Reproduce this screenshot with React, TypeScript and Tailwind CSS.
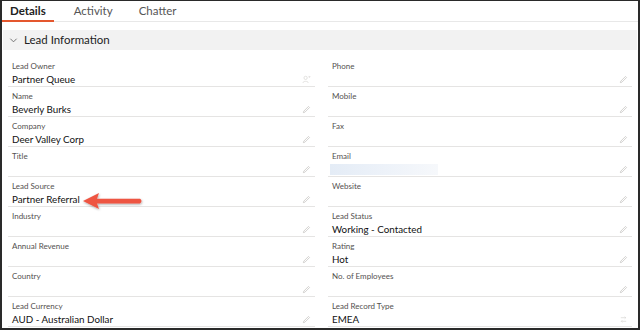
import React from 'react';

type Field = { label: string; value?: string; icon?: 'edit' | 'owner' | 'type'; blur?: boolean };

const LEFT: Field[] = [
  { label: 'Lead Owner', value: 'Partner Queue', icon: 'owner' },
  { label: 'Name', value: 'Beverly Burks' },
  { label: 'Company', value: 'Deer Valley Corp' },
  { label: 'Title' },
  { label: 'Lead Source', value: 'Partner Referral' },
  { label: 'Industry' },
  { label: 'Annual Revenue' },
  { label: 'Country' },
  { label: 'Lead Currency', value: 'AUD - Australian Dollar' },
];

const RIGHT: Field[] = [
  { label: 'Phone' },
  { label: 'Mobile' },
  { label: 'Fax' },
  { label: 'Email', blur: true },
  { label: 'Website' },
  { label: 'Lead Status', value: 'Working - Contacted' },
  { label: 'Rating', value: 'Hot' },
  { label: 'No. of Employees' },
  { label: 'Lead Record Type', value: 'EMEA', icon: 'type' },
];

const Pencil = () => (
  <svg width="9" height="9" viewBox="0 0 10 10" className="shrink-0">
    <path d="M1.5 8.5 L2 6.8 L7.2 1.6 L8.4 2.8 L3.2 8 Z" fill="none" stroke="#c9c7c5" strokeWidth="0.9" />
  </svg>
);

const OwnerIcon = () => (
  <svg width="9" height="9" viewBox="0 0 10 10" className="shrink-0">
    <circle cx="4" cy="3.2" r="1.8" fill="none" stroke="#d8d6d4" strokeWidth="0.8" />
    <path d="M1 8.8 C1.3 6.4 6.7 6.4 7 8.8" fill="none" stroke="#d8d6d4" strokeWidth="0.8" />
    <path d="M7 2 L9 2 M8 1 L9 2 L8 3" fill="none" stroke="#d8d6d4" strokeWidth="0.7" />
  </svg>
);

const TypeIcon = () => (
  <svg width="9" height="9" viewBox="0 0 10 10" className="shrink-0">
    <path d="M2 3 H7.5 M6.3 1.8 L7.5 3 L6.3 4.2 M8 7 H2.5 M3.7 5.8 L2.5 7 L3.7 8.2" fill="none" stroke="#d8d6d4" strokeWidth="0.8" />
  </svg>
);

const FieldRow = ({ f }: { f: Field }) => (
  <div className="h-[30px] border-b border-[#e5e4e3] flex flex-col pl-[4px] pr-[4px] pt-[3px]">
    <div className="text-[8px] leading-[12px] text-[#54514f]">{f.label}</div>
    <div className="flex items-center justify-between h-[14px]">
      {f.blur ? (
        <div className="w-[108px] h-[11px] bg-gradient-to-r from-[#e4ecf6] via-[#edf2f9] to-[#f6f8fb] -ml-[2px]" />
      ) : (
        <span className="text-[9.8px] leading-[14px] text-[#111]">{f.value}</span>
      )}
      {f.icon === 'owner' ? <OwnerIcon /> : f.icon === 'type' ? <TypeIcon /> : <Pencil />}
    </div>
  </div>
);

export default function App() {
  return (
    <div
      className="relative w-[640px] h-[330px] overflow-hidden bg-white border-l-2 border-t border-r-2 border-b-2 border-[#2a2a2a] flex flex-col"
      style={{ fontFamily: 'Lato, "Open Sans", sans-serif' }}
    >
      {/* tabs */}
      <div className="flex items-end h-[21px] border-b border-[#e8e8e8] shrink-0">
        <div className="h-full flex items-center px-[8px] border-b-2 border-[#e4572e] -mb-[1px] text-[11.5px] font-bold text-[#222]">Details</div>
        <div className="h-full flex items-center ml-[20px] text-[11.5px] text-[#555]">Activity</div>
        <div className="h-full flex items-center ml-[26px] text-[11.5px] text-[#555]">Chatter</div>
      </div>

      {/* section header */}
      <div className="mt-[8px] mx-[1px] h-[20px] bg-[#f2f2f2] flex items-center pl-[6px] gap-[6px] shrink-0">
        <svg width="9" height="9" viewBox="0 0 10 10">
          <path d="M1.5 3 L5 6.5 L8.5 3" fill="none" stroke="#666" strokeWidth="1" />
        </svg>
        <span className="text-[11.5px] text-[#222]">Lead Information</span>
      </div>

      {/* fields */}
      <div className="grid grid-cols-[307px_304px] gap-x-[13px] pl-[6px] mt-[7px]">
        <div className="flex flex-col">
          {LEFT.map(f => <FieldRow key={f.label} f={f} />)}
        </div>
        <div className="flex flex-col">
          {RIGHT.map(f => <FieldRow key={f.label} f={f} />)}
        </div>
      </div>

      {/* annotation arrow */}
      <svg className="absolute left-[78px] top-[189px]" width="66" height="24" viewBox="0 0 66 24">
        <defs>
          <filter id="sh" x="-20%" y="-40%" width="140%" height="180%">
            <feDropShadow dx="0.5" dy="1" stdDeviation="0.8" floodColor="#000" floodOpacity="0.35" />
          </filter>
        </defs>
        <g filter="url(#sh)">
          <path d="M3 11 L19 3 L17 8.8 L60 8.8 Q63 11 60 13.4 L17 13.4 L19 19 Z" fill="#ee5443" />
        </g>
      </svg>
    </div>
  );
}
